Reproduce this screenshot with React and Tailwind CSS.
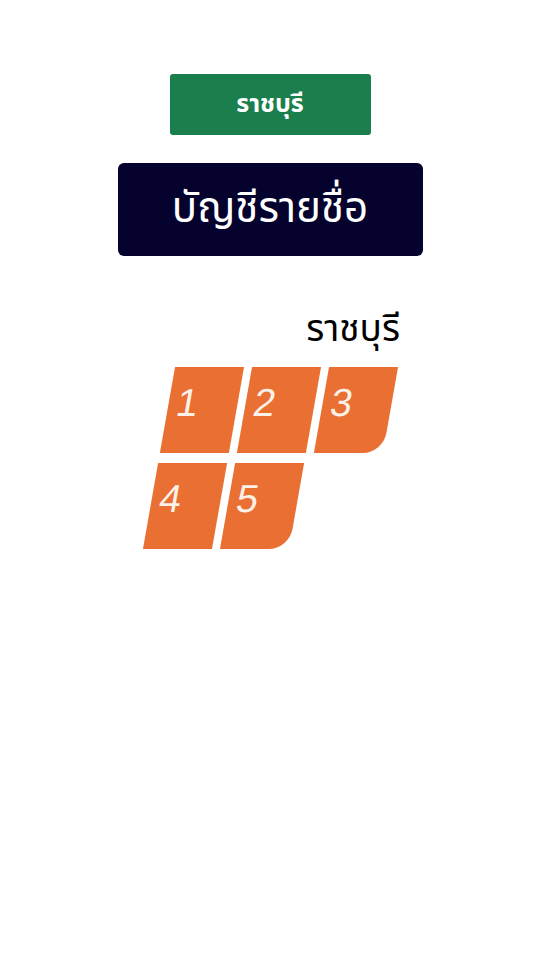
const thai = { fontFamily: '"Noto Sans Thai", "Noto Sans", "DejaVu Sans", sans-serif' };

const tiles = [
  { n: 1 },
  { n: 2 },
  { n: 3, last: true },
  { n: 4 },
  { n: 5, last: true },
];

export default function App() {
  return (
    <div className="min-h-[960px] w-full bg-white flex flex-col items-center pt-[74px]">
      <div
        className="w-[201px] h-[61px] rounded-[3px] bg-[#1a7f4c] flex items-center justify-center text-white font-bold text-[25px]"
        style={thai}
      >
        ราชบุรี
      </div>

      <div
        className="mt-[28px] w-[305px] h-[93px] rounded-[6px] bg-[#05032d] flex items-center justify-center text-white text-[42px]"
        style={thai}
      >
        บัญชีรายชื่อ
      </div>

      <div className="mt-[56px] w-[260px] flex justify-end">
        <span className="text-[37px] text-black leading-none" style={thai}>
          ราชบุรี
        </span>
      </div>

      {/* logo grid */}
      <div className="mt-[18px] grid grid-cols-[69px_69px_69px] gap-x-[8px] gap-y-[10px] -skew-x-[10deg]">
        {tiles.map(t => (
          <div
            key={t.n}
            className={`h-[86px] bg-[#e96f32] pl-[8px] pt-[16px] ${t.last ? 'rounded-br-[20px]' : ''}`}
          >
            <span
              className="text-[39px] leading-none text-[#fbf1e8]"
              style={{ fontFamily: '"Liberation Sans", Arial, sans-serif' }}
            >
              {t.n}
            </span>
          </div>
        ))}
      </div>
    </div>
  );
}
